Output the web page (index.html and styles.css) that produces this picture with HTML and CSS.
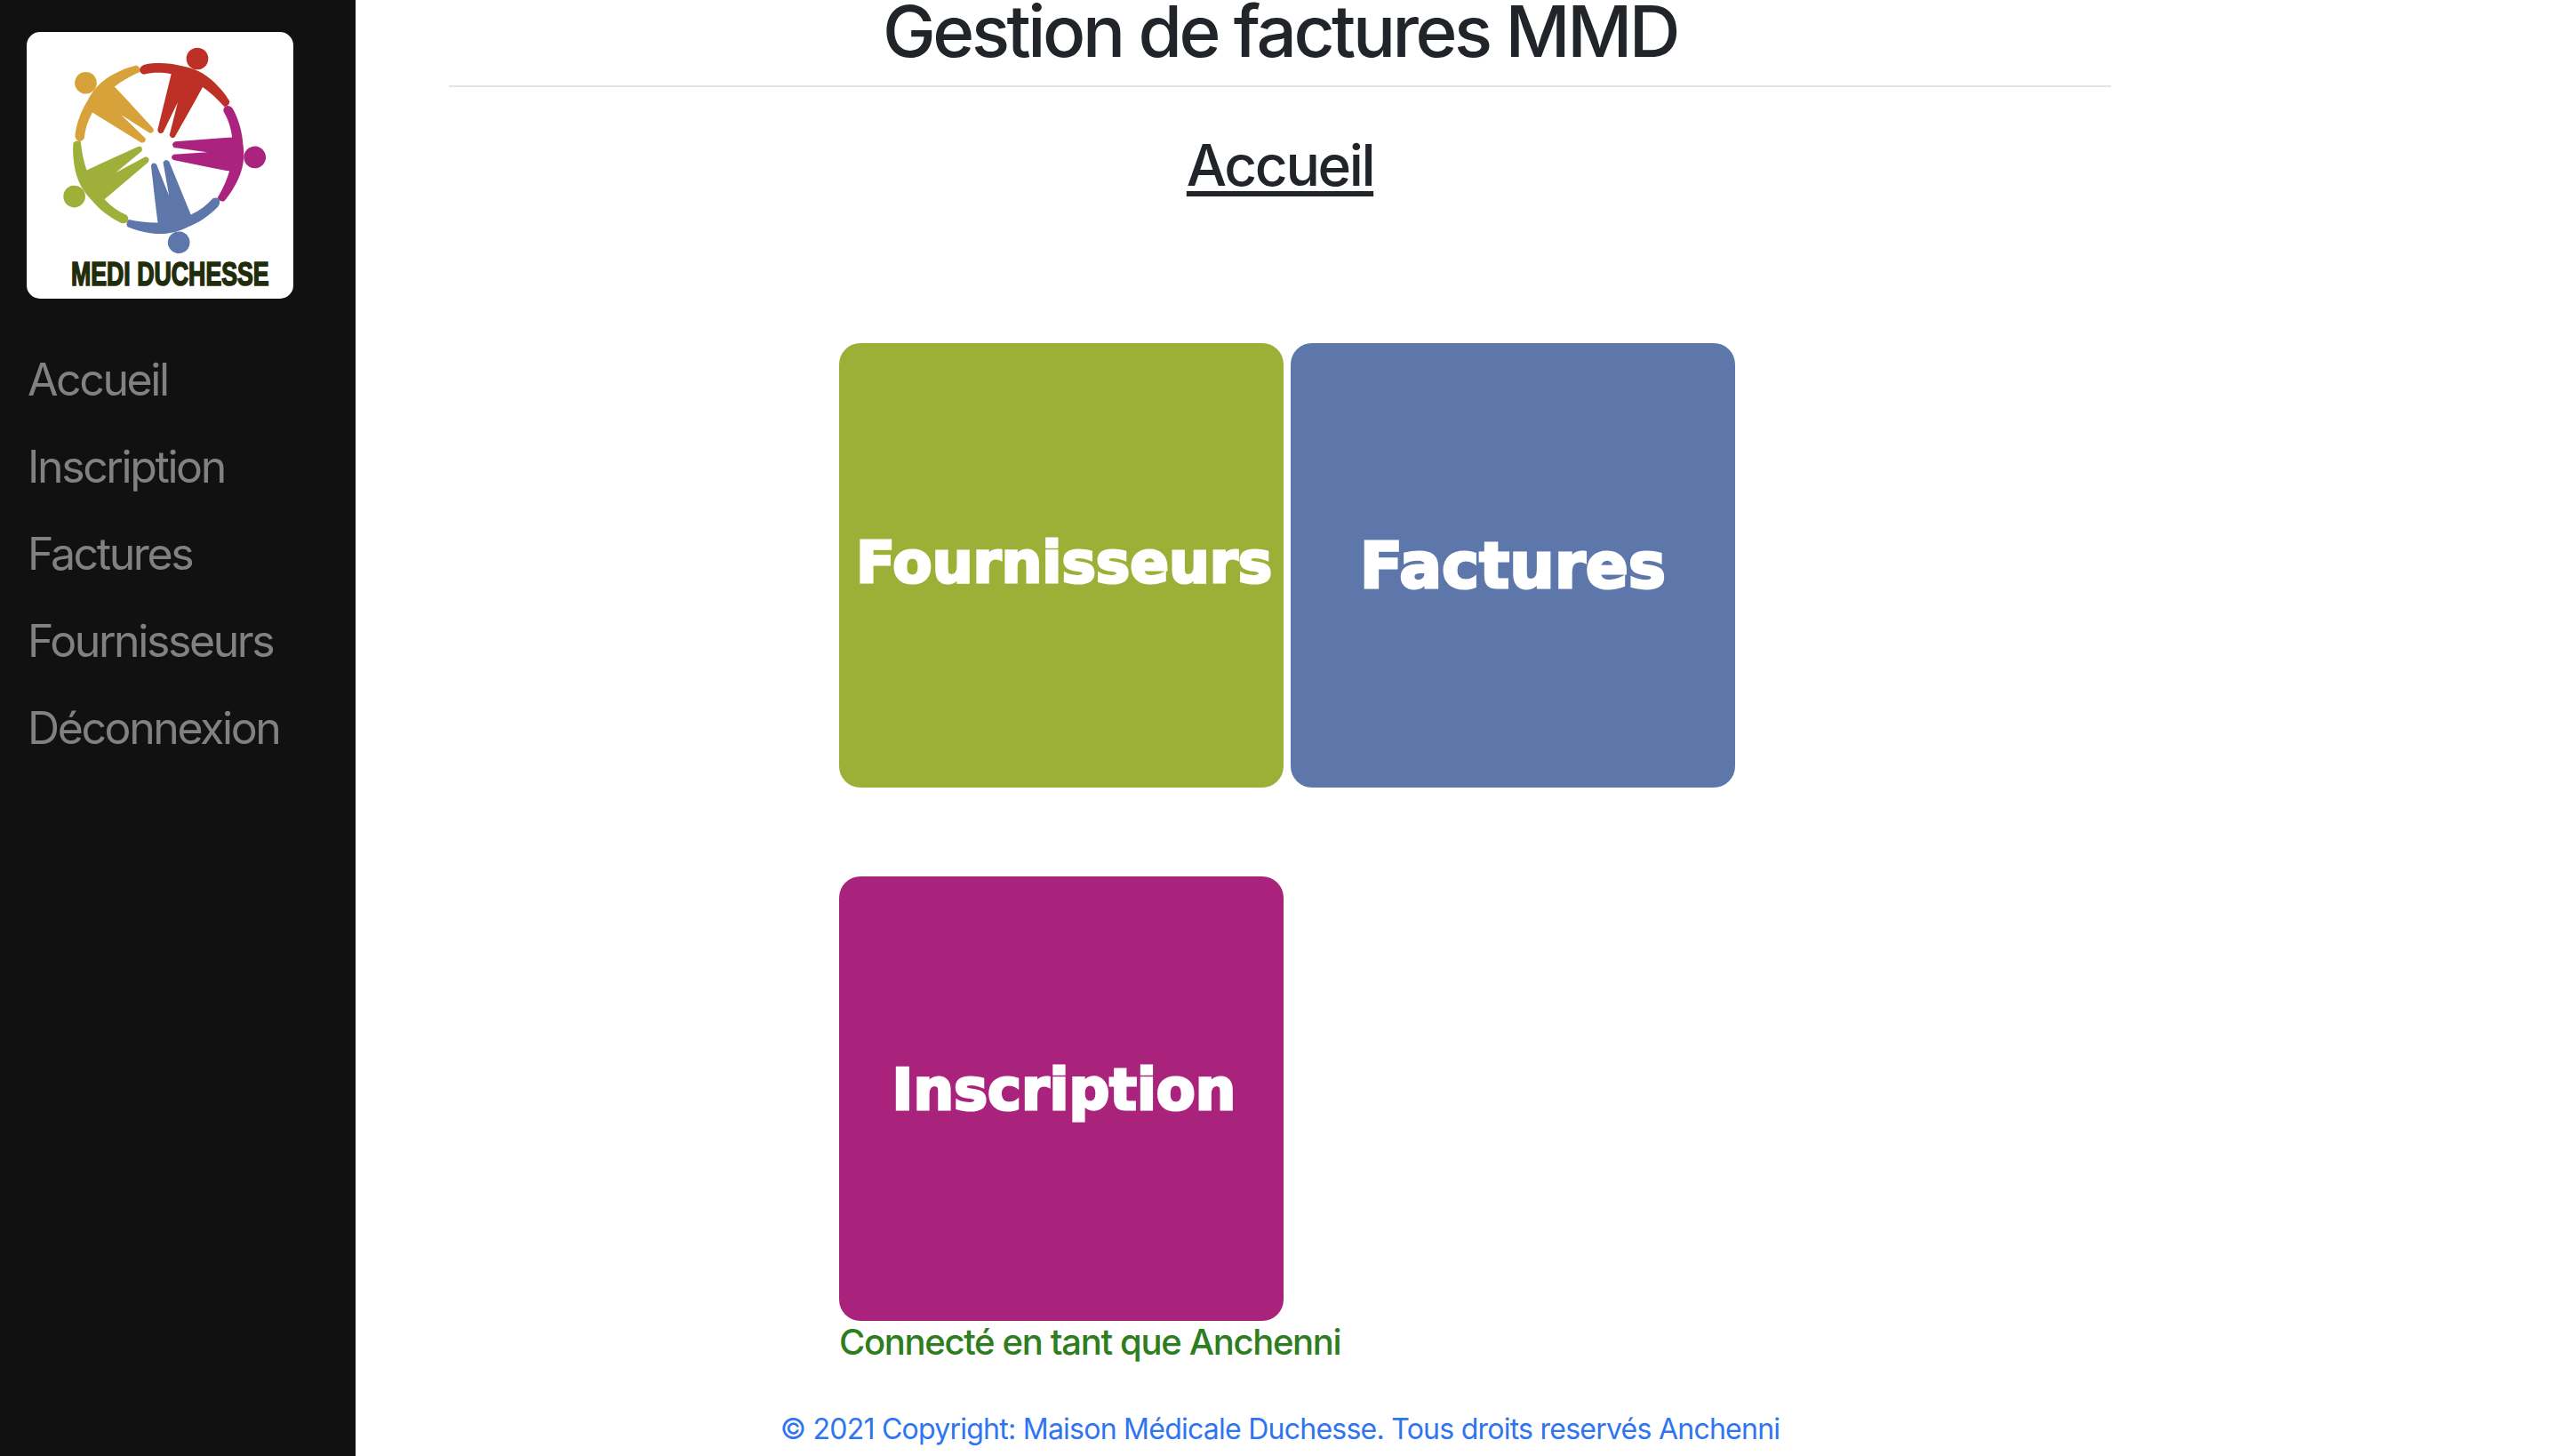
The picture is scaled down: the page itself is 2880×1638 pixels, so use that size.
FILE: index.html
```html
<!DOCTYPE html>
<html lang="fr">
<head>
<meta charset="utf-8">
<title>Gestion de factures MMD</title>
<link rel="stylesheet" href="styles.css">
</head>
<body>
<div class="page">
  <aside class="sidebar">
    <svg class="logo" viewBox="90 108 900 900" role="img" aria-label="Medi Duchesse">
      <defs>
        <g id="person">
          <circle cx="666" cy="198" r="37"/>
          <path d="M488 218 C530 210 575 213 610 222 C650 228 690 245 725 280 C745 300 762 320 775 342 Q774 358 757 360 C735 335 710 312 684 294 L656 345 L590 462 Q578 472 572 456 L600 345 L550 448 Q534 454 532 438 L578 250 C545 244 515 244 486 251 Q468 246 472 232 Q476 221 488 218 Z"/>
        </g>
      </defs>
      <use href="#person" class="p-red"/>
      <use href="#person" class="p-magenta" transform="rotate(72 534 498)"/>
      <use href="#person" class="p-blue" transform="rotate(144 534 498)"/>
      <use href="#person" class="p-green" transform="rotate(216 534 498)"/>
      <use href="#person" class="p-orange" transform="rotate(288 534 498)"/>
      <text class="logo-text" x="240" y="964" textLength="668" lengthAdjust="spacingAndGlyphs">MEDI DUCHESSE</text>
    </svg>
    <nav class="nav">
      <a href="#">Accueil</a>
      <a href="#">Inscription</a>
      <a href="#">Factures</a>
      <a href="#">Fournisseurs</a>
      <a href="#">Déconnexion</a>
    </nav>
  </aside>
  <main class="main">
    <div class="container">
      <h1 class="title">Gestion de factures MMD</h1>
      <hr class="rule">
      <h2 class="subtitle">Accueil</h2>
      <div class="tiles">
        <a class="tile tile-green" href="#"><span class="tile-label label-fournisseurs">Fournisseurs</span></a>
        <a class="tile tile-blue" href="#"><span class="tile-label label-factures">Factures</span></a>
        <a class="tile tile-magenta" href="#"><span class="tile-label label-inscription">Inscription</span></a>
      </div>
      <p class="status">Connecté en tant que Anchenni</p>
    </div>
    <footer class="footer">© 2021 Copyright: Maison Médicale Duchesse. Tous droits reservés Anchenni</footer>
  </main>
</div>
</body>
</html>
```
FILE: styles.css
```css
* { box-sizing: border-box; }
html, body { margin: 0; height: 100%; }
body { background: #fff; color: #212529; font-family: Inter, "Liberation Sans", sans-serif; overflow: hidden; }
.page { display: flex; height: 1638px; }
.sidebar { width: 400px; flex: none; background: #111; padding: 36px 0 0 30px; }
.logo { display: block; width: 300px; height: 300px; background: #fff; border-radius: 15px; }
.p-red { fill: #bc3026; }
.p-magenta { fill: #a9237f; }
.p-blue { fill: #5e77aa; }
.p-green { fill: #9eb03a; }
.p-orange { fill: #d8a23a; }
.logo-text { font-family: "Liberation Sans", sans-serif; font-weight: 700; font-size: 112px; fill: #1f2d0a; stroke: #1f2d0a; stroke-width: 5px; }
.nav { display: flex; flex-direction: column; margin: 42px 0 0 1px; }
.nav a { color: #818181; text-decoration: none; font-size: 50px; line-height: 98px; letter-spacing: -2.4px; }
.main { flex: 1; min-width: 0; display: flex; flex-direction: column; align-items: center; padding-right: 400px; }
.container { width: 1870px; }
.title { margin: 0; font-size: 80px; font-weight: 500; line-height: 70px; letter-spacing: -3.45px; text-align: center; }
.rule { margin: 26px 0 0; border: 0; height: 2px; background: #e4e4e4; }
.subtitle { margin: 50px 0 0; font-size: 64px; font-weight: 500; line-height: 76px; letter-spacing: -2.4px; text-align: center; text-decoration: underline; text-decoration-thickness: 6px; text-underline-offset: 6px; }
.tiles { display: grid; grid-template-columns: 500px 500px; column-gap: 8px; row-gap: 100px; margin: 162px 0 0 439px; }
.tile { height: 500px; border-radius: 24px; display: flex; align-items: center; justify-content: center; text-decoration: none; }
.tile-green { background: #9cb038; }
.tile-blue { background: #5e77aa; }
.tile-magenta { background: #a9227b; }
.tile-label { color: #fff; font-family: "DejaVu Sans", sans-serif; font-weight: 700; -webkit-text-stroke: 3px #fff; }
.label-fournisseurs { font-size: 64.5px; margin: -8px 0 0 6px; }
.label-factures { font-size: 71px; margin: 0; }
.label-inscription { font-size: 64px; margin: -20px 0 0 6px; }
.status { margin: 0 0 0 439px; font-size: 40px; font-weight: 500; line-height: 48px; letter-spacing: -1.33px; color: #2e7d1e; }
.footer { margin-top: 50px; font-size: 32px; line-height: 48px; letter-spacing: -0.75px; color: #2f74f0; text-align: center; }
```
